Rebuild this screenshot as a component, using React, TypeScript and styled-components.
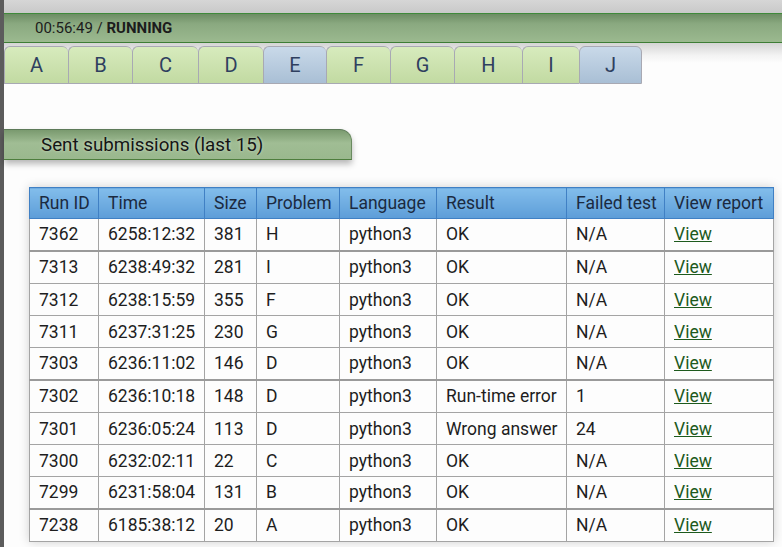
import React, {ReactElement} from 'react';
import styled, {createGlobalStyle} from "styled-components";

const GlobalStyle = createGlobalStyle`
  html, body {
    margin: 0;
    padding: 0;
    background: #fdfdfd;
  }
  body {
    font-family: Roboto, "Liberation Sans", Arial, sans-serif;
  }
`

const Page = styled.div`
  min-height: 547px;
  border-left: 4px solid #5c5c5c;
  background: #fdfdfd;
  display: flex;
  flex-direction: column;
`

const TopStrip = styled.div`
  height: 13px;
  background: linear-gradient(#d6d6d6, #c9c9c9);
`

const StatusBar = styled.div`
  height: 28px;
  border-top: 1px solid #3f8a3a;
  border-bottom: 1px solid #3d7d35;
  background: linear-gradient(#6d8d64 0%, #8aa980 35%, #9bb98f 100%);
  display: flex;
  align-items: center;
  padding-left: 31px;
  font-size: 15px;
  color: #1c1c1c;
  b {
    font-weight: bold;
  }
`

const TabsArea = styled.div`
  background: linear-gradient(#d4d4d4 0px, #f2f2f2 12px, #fdfdfd 20px);
  padding-top: 3px;
  display: flex;
`

interface TabProps {
  $width: number;
  $active?: boolean;
  $last?: boolean;
}

const Tab = styled.div<TabProps>`
  box-sizing: border-box;
  width: ${p => p.$width}px;
  height: 38px;
  border: 1px solid #a8a9b3;
  border-right: ${p => p.$last ? "1px solid #a8a9b3" : "none"};
  border-radius: 6px 6px 0 0;
  background: ${p => p.$active
    ? "linear-gradient(#c9d9e9, #a9bfd5)"
    : "linear-gradient(#d7ebbd, #c2daa2)"};
  display: flex;
  align-items: center;
  justify-content: center;
  font-size: 20px;
  color: #2f3f5f;
`

const SectionHeader = styled.div`
  box-sizing: border-box;
  margin-top: 45px;
  width: 348px;
  height: 31px;
  border-top: 1px solid #5d7a59;
  border-bottom: 1px solid #4e7e3e;
  border-right: 1px solid #6a8a60;
  border-top-right-radius: 12px;
  background: linear-gradient(#7a9a6f 0%, #a0bd94 45%, #9ab88e 100%);
  box-shadow: 0 4px 6px rgba(0, 0, 0, .28);
  display: flex;
  align-items: center;
  padding-left: 37px;
  font-size: 18.75px;
  color: #151515;
  text-shadow: 0 0 3px rgba(255, 255, 255, .5);
`

const Table = styled.table`
  margin-top: 27px;
  margin-left: 25px;
  width: 744px;
  table-layout: fixed;
  border-collapse: collapse;
  box-shadow: 0 0 10px rgba(0, 0, 0, .18);
  background: #fdfdfd;
`

const HeadCell = styled.th<{$width: number}>`
  width: ${p => p.$width - 10}px;
  height: 30px;
  padding: 0 0 0 9px;
  text-align: left;
  font-weight: normal;
  font-size: 17.5px;
  color: #1b2a40;
  border: 1px solid #4080c4;
  background: linear-gradient(#82bdeb, #5d9dd8);
`

const Row = styled.tr<{$thick?: boolean}>`
  height: ${p => p.$thick ? 33 : 32}px;
  td {
    border-top: ${p => p.$thick ? "2px solid #9a9a9a" : "1px solid #a4a4a4"};
  }
`

const Cell = styled.td`
  padding: 0 0 0 9px;
  border: 1px solid #a4a4a4;
  font-size: 17.5px;
  color: #1e1e1e;
  white-space: nowrap;
`

const ViewLink = styled.a`
  color: #1d5a1d;
  text-decoration: underline;
  cursor: pointer;
`

const tabs = [
  {letter: "A", width: 64},
  {letter: "B", width: 64},
  {letter: "C", width: 66},
  {letter: "D", width: 65},
  {letter: "E", width: 63, active: true},
  {letter: "F", width: 64},
  {letter: "G", width: 64},
  {letter: "H", width: 68},
  {letter: "I", width: 57},
  {letter: "J", width: 63, active: true},
];

const columns = [
  {name: "Run ID", width: 69},
  {name: "Time", width: 106},
  {name: "Size", width: 52},
  {name: "Problem", width: 83},
  {name: "Language", width: 97},
  {name: "Result", width: 130},
  {name: "Failed test", width: 98},
  {name: "View report", width: 109},
];

const runs = [
  {id: "7362", time: "6258:12:32", size: "381", problem: "H", result: "OK", failed: "N/A"},
  {id: "7313", time: "6238:49:32", size: "281", problem: "I", result: "OK", failed: "N/A", thick: true},
  {id: "7312", time: "6238:15:59", size: "355", problem: "F", result: "OK", failed: "N/A"},
  {id: "7311", time: "6237:31:25", size: "230", problem: "G", result: "OK", failed: "N/A"},
  {id: "7303", time: "6236:11:02", size: "146", problem: "D", result: "OK", failed: "N/A"},
  {id: "7302", time: "6236:10:18", size: "148", problem: "D", result: "Run-time error", failed: "1", thick: true},
  {id: "7301", time: "6236:05:24", size: "113", problem: "D", result: "Wrong answer", failed: "24"},
  {id: "7300", time: "6232:02:11", size: "22", problem: "C", result: "OK", failed: "N/A"},
  {id: "7299", time: "6231:58:04", size: "131", problem: "B", result: "OK", failed: "N/A"},
  {id: "7238", time: "6185:38:12", size: "20", problem: "A", result: "OK", failed: "N/A", thick: true},
];

const App = () : ReactElement => {
  return (
    <Page>
      <GlobalStyle/>
      <TopStrip/>
      <StatusBar>00:56:49 /&nbsp;<b>RUNNING</b></StatusBar>
      <TabsArea>
        {tabs.map((t, i) =>
          <Tab key={t.letter} $width={t.width} $active={t.active} $last={i === tabs.length - 1}>{t.letter}</Tab>
        )}
      </TabsArea>
      <SectionHeader>Sent submissions (last 15)</SectionHeader>
      <Table>
        <thead>
          <tr>
            {columns.map(c => <HeadCell key={c.name} $width={c.width}>{c.name}</HeadCell>)}
          </tr>
        </thead>
        <tbody>
          {runs.map(r => (
            <Row key={r.id} $thick={r.thick}>
              <Cell>{r.id}</Cell>
              <Cell>{r.time}</Cell>
              <Cell>{r.size}</Cell>
              <Cell>{r.problem}</Cell>
              <Cell>python3</Cell>
              <Cell>{r.result}</Cell>
              <Cell>{r.failed}</Cell>
              <Cell><ViewLink>View</ViewLink></Cell>
            </Row>
          ))}
        </tbody>
      </Table>
    </Page>
  );
}

export default App;
